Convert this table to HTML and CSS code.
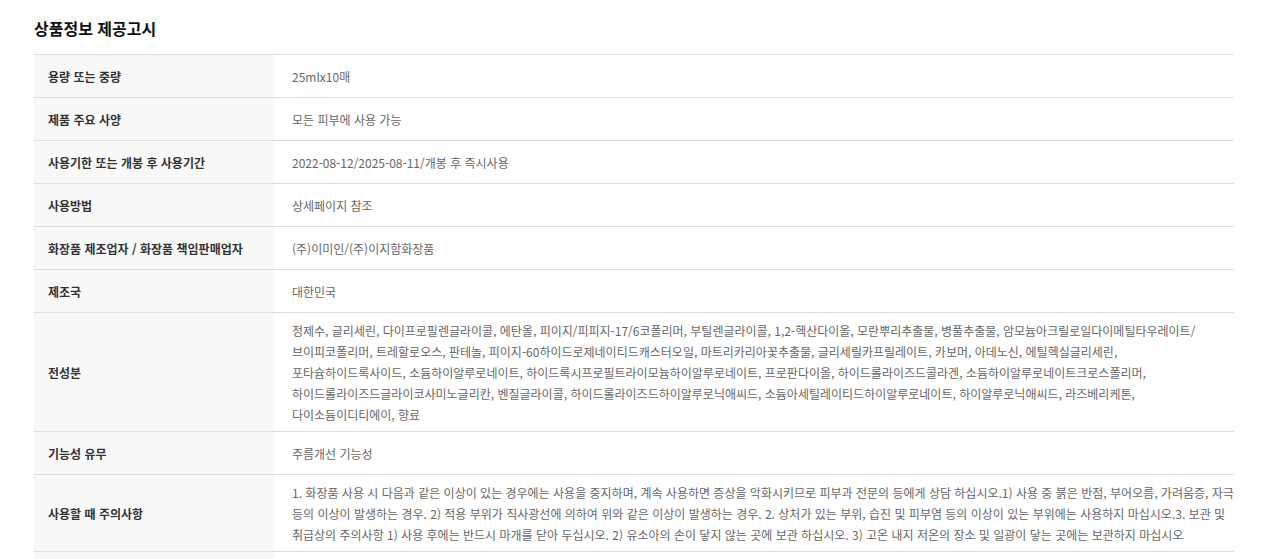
FILE: index.html
```html
<!DOCTYPE html>
<html lang="ko">
<head>
<meta charset="utf-8">
<title>상품정보 제공고시</title>
<link rel="stylesheet" href="styles.css">
</head>
<body>
<div class="wrap">
  <h2 class="title">상품정보 제공고시</h2>
  <div class="info">
    <div class="row"><div class="th">용량 또는 중량</div><div class="td"><p>25mlx10매</p></div></div>
    <div class="row"><div class="th">제품 주요 사양</div><div class="td"><p>모든 피부에 사용 가능</p></div></div>
    <div class="row"><div class="th">사용기한 또는 개봉 후 사용기간</div><div class="td"><p>2022-08-12/2025-08-11/개봉 후 즉시사용</p></div></div>
    <div class="row"><div class="th">사용방법</div><div class="td"><p>상세페이지 참조</p></div></div>
    <div class="row"><div class="th">화장품 제조업자 / 화장품 책임판매업자</div><div class="td"><p>(주)이미인/(주)이지함화장품</p></div></div>
    <div class="row"><div class="th">제조국</div><div class="td"><p>대한민국</p></div></div>
    <div class="row"><div class="th">전성분</div><div class="td"><p>정제수, 글리세린, 다이프로필렌글라이콜, 에탄올, 피이지/피피지-17/6코폴리머, 부틸렌글라이콜, 1,2-헥산다이올, 모란뿌리추출물, 병풀추출물, 암모늄아크릴로일다이메틸타우레이트/<wbr>브이피코폴리머, 트레할로오스, 판테놀, 피이지-60하이드로제네이티드캐스터오일, 마트리카리아꽃추출물, 글리세릴카프릴레이트, 카보머, 아데노신, 에틸헥실글리세린, 포타슘하이드록사이드, 소듐하이알루로네이트, 하이드록시프로필트라이모늄하이알루로네이트, 프로판다이올, 하이드롤라이즈드콜라겐, 소듐하이알루로네이트크로스폴리머, 하이드롤라이즈드글라이코사미노글리칸, 벤질글라이콜, 하이드롤라이즈드하이알루로닉애씨드, 소듐아세틸레이티드하이알루로네이트, 하이알루로닉애씨드, 라즈베리케톤, 다이소듐이디티에이, 향료</p></div></div>
    <div class="row"><div class="th">기능성 유무</div><div class="td"><p>주름개선 기능성</p></div></div>
    <div class="row"><div class="th">사용할 때 주의사항</div><div class="td"><p>1. 화장품 사용 시 다음과 같은 이상이 있는 경우에는 사용을 중지하며, 계속 사용하면 증상을 악화시키므로 피부과 전문의 등에게 상담 하십시오.1) 사용 중 붉은 반점, 부어오름, 가려움증, 자극 등의 이상이 발생하는 경우. 2) 적용 부위가 직사광선에 의하여 위와 같은 이상이 발생하는 경우. 2. 상처가 있는 부위, 습진 및 피부염 등의 이상이 있는 부위에는 사용하지 마십시오.3. 보관 및 취급상의 주의사항 1) 사용 후에는 반드시 마개를 닫아 두십시오. 2) 유소아의 손이 닿지 않는 곳에 보관 하십시오. 3) 고온 내지 저온의 장소 및 일광이 닿는 곳에는 보관하지 마십시오</p></div></div>
    <div class="row"><div class="th">품질보증기준</div><div class="td"><p>공정거래위원회 고시 소비자분쟁해결기준에 의거 교환 또는 보상 받을 수 있습니다.</p></div></div>
  </div>
</div>
</body>
</html>
```

FILE: styles.css
```css
html, body {
  margin: 0;
  padding: 0;
  background: #fff;
}
body {
  font-family: "Noto Sans CJK KR", "Noto Sans", sans-serif;
  color: #333;
}
.wrap {
  padding: 0 34px;
}
.title {
  margin: 0;
  padding: 15px 0 13px;
  font-size: 16px;
  line-height: 26px;
  font-weight: 700;
  color: #111;
}
.info {
  border-top: 1px solid #ddd;
}
.row {
  display: flex;
  border-bottom: 1px solid #ddd;
}
.th {
  width: 240px;
  flex: none;
  box-sizing: border-box;
  background: #f8f8f8;
  padding: 0 14px;
  display: flex;
  align-items: center;
  font-size: 12px;
  font-weight: 700;
  color: #333;
}
.td {
  flex: 1;
  min-width: 0;
  min-height: 42px;
  box-sizing: border-box;
  padding: 6.5px 0 6.5px 18px;
  display: flex;
  align-items: center;
  font-size: 12px;
  line-height: 21px;
  color: #666;
  word-break: keep-all;
}
.td p {
  margin: 0;
}
```
